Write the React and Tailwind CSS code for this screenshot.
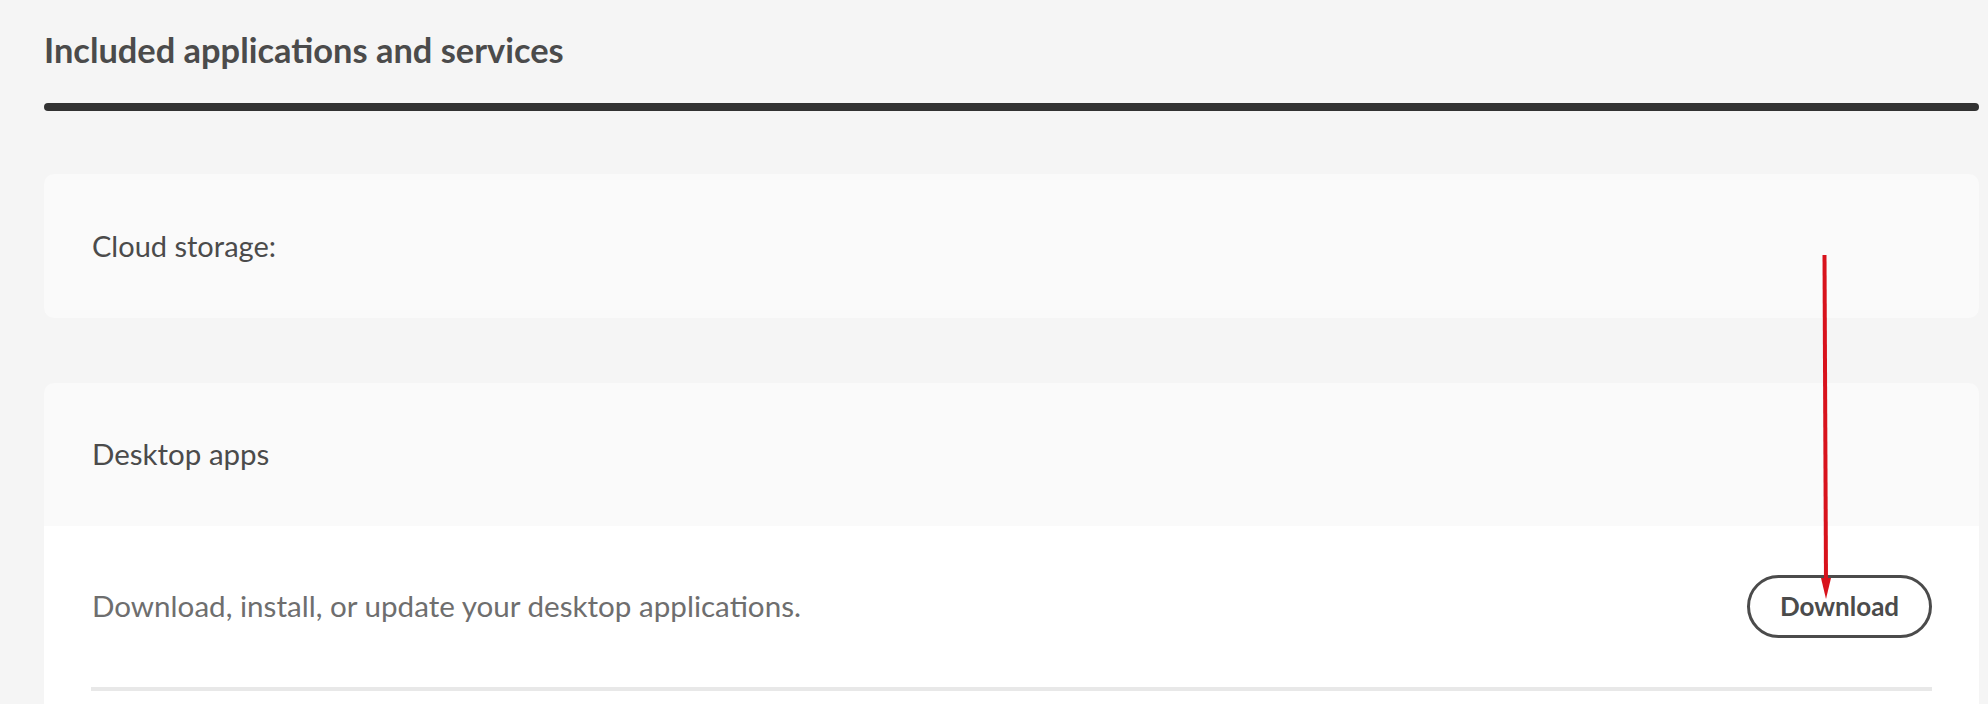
import React from 'react';

// Annotation arrow drawn over the page (points at the Download button)
function RedArrow() {
  return (
    <svg className="absolute left-0 top-0 pointer-events-none" width="1988" height="704" viewBox="0 0 1988 704">
      <line x1="1824.5" y1="255" x2="1826" y2="582" stroke="#d8121c" strokeWidth="4" />
      <polygon points="1821,578 1831,578 1826,599" fill="#d8121c" />
    </svg>
  );
}

export default function App() {
  const font = { fontFamily: 'Lato, "Open Sans", sans-serif' };
  return (
    <div className="relative min-h-screen h-[704px] overflow-hidden bg-[#f5f5f5]" style={font}>
      <div className="pt-[30px] pl-[44px] pr-[9px]">
        <h2 className="text-[34.4px] leading-[40px] font-bold text-[#4b4b4b]">Included applications and services</h2>
        <div className="mt-[33px] h-[8px] rounded-full bg-[#323232]" />

        {/* Cloud storage card */}
        <div className="mt-[63px] h-[144px] flex items-center px-[48px] rounded-[10px] bg-[#fafafa]">
          <span className="text-[29px] text-[#4b4b4b]">Cloud storage:</span>
        </div>

        {/* Desktop apps card */}
        <div className="mt-[65px] rounded-t-[10px] overflow-hidden">
          <div className="h-[143px] flex items-center px-[48px] bg-[#fafafa]">
            <span className="text-[29.5px] text-[#4b4b4b]">Desktop apps</span>
          </div>
          <div className="bg-white px-[47px] pt-[49px] pb-[60px]">
            <div className="flex items-center justify-between h-[63px]">
              <span className="pl-px text-[29.6px] text-[#6e6e6e]">Download, install, or update your desktop applications.</span>
              <button className="w-[185px] h-[63px] rounded-full border-[3px] border-[#4b4b4b] text-[26px] font-bold text-[#4b4b4b]">
                Download
              </button>
            </div>
            <div className="mt-[49px] h-[4px] bg-[#e8e8e8]" />
          </div>
        </div>
      </div>
      <RedArrow />
    </div>
  );
}
